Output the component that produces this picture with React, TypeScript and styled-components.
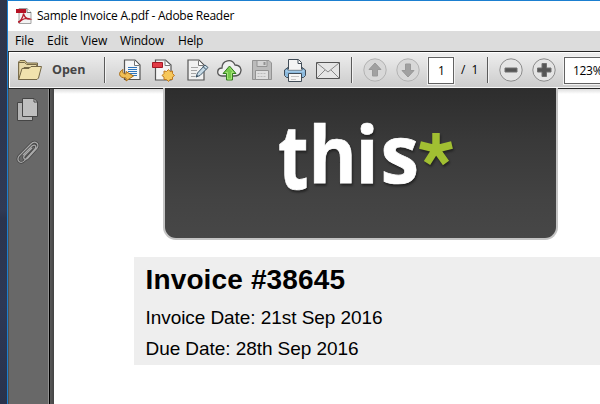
import React from "react";
import styled, { createGlobalStyle } from "styled-components";

const GlobalStyle = createGlobalStyle`
  * { box-sizing: border-box; }
  body { margin: 0; overflow: hidden; background: #fff; }
  svg { display: block; flex: none; overflow: visible; }
`;

const Desktop = styled.div`
  width: 600px;
  height: 404px;
  display: flex;
  overflow: hidden;
  padding-left: 7px;
  background: linear-gradient(180deg, #30364b 0, #2c354e 28%, #303a55 52%, #2b344d 54%, #2d3855 75%, #29324c 100%);
  font-family: "Open Sans", "Noto Sans", sans-serif;
  color: #000;
`;
const Window = styled.div`
  width: 593px;
  display: flex;
  flex-direction: column;
  flex: none;
  border-left: 1px solid #1b7fd0;
  border-top: 1px solid #1b7fd0;
  background: #fff;
`;
const TitleBar = styled.header`
  height: 30px;
  flex: none;
  display: flex;
  align-items: center;
  padding-left: 8px;
  gap: 5px;
`;
const Label = styled.span<{ $spacing?: number; $width?: number }>`
  flex: none;
  font-size: 12px;
  line-height: 16px;
  white-space: pre;
  letter-spacing: ${(p) => p.$spacing ?? 0}px;
  width: ${(p) => (p.$width ? `${p.$width}px` : "auto")};
`;
const MenuBar = styled.nav`
  height: 20px;
  flex: none;
  display: flex;
  align-items: center;
  padding-left: 7px;
  background: #dcdcdc;
`;
const Toolbar = styled.div`
  height: 38px;
  flex: none;
  display: flex;
  align-items: center;
  overflow: hidden;
  border-top: 1px solid #262626;
  border-bottom: 1px solid #252525;
  border-left: 1px solid #454545;
  box-shadow: inset 1px 1px #fff, inset 0 -1px #f4f4f4;
  background: linear-gradient(#eeeeee, #cbcbcb);
  padding-left: 9px;
`;
const OpenLabel = styled.span`
  flex: none;
  margin-left: 10px;
  width: 52px;
  font-size: 12.5px;
  font-weight: 700;
  line-height: 18px;
  color: #454545;
`;
const Divider = styled.i<{ $after: number }>`
  width: 2px;
  height: 26px;
  flex: none;
  margin-right: ${(p) => p.$after}px;
  background: linear-gradient(90deg, #5b5b5b 50%, #f2f2f2 50%);
`;
const Tools = styled.div<{ $gap: number; $after: number }>`
  display: flex;
  flex: none;
  align-items: center;
  gap: ${(p) => p.$gap}px;
  margin-right: ${(p) => p.$after}px;
`;
const Field = styled.div<{ $w: number; $pad: number }>`
  width: ${(p) => p.$w}px;
  height: 27px;
  flex: none;
  padding-left: ${(p) => p.$pad}px;
  border: 1px solid #626262;
  box-shadow: 0 0 0 1px #f1f1f1;
  background: #fff;
  font-size: 12px;
  letter-spacing: -0.3px;
  line-height: 25px;
`;
const PageCount = styled.div`
  width: 33px;
  flex: none;
  display: flex;
  gap: 6px;
  padding-left: 7px;
  font-size: 12px;
  line-height: 16px;
`;
const Body = styled.div`
  flex: 1;
  min-height: 0;
  display: flex;
`;
const Sidebar = styled.aside`
  width: 42px;
  flex: none;
  display: flex;
  flex-direction: column;
  align-items: flex-start;
  gap: 20px;
  padding: 9px 0 0 8px;
  border-left: 1px solid #505050;
  border-right: 1px solid #000;
  box-shadow: inset -1px 0 #929292;
  background: #686868;
`;
const Gutter = styled.div`
  width: 4px;
  flex: none;
  background: linear-gradient(90deg, #595959, #434343);
`;
const Page = styled.main`
  flex: 1;
  min-width: 0;
  background: linear-gradient(#dedede 0, #fff 5px);
`;
const Banner = styled.div`
  width: 395px;
  height: 152px;
  margin-left: 109px;
  margin-top: -1px;
  border: solid #c4c4c4;
  border-width: 0 2px 2px;
  border-radius: 0 0 13px 13px;
  background: linear-gradient(#2d2d2d 0, #393939 35%, #434343 75%, #474747 100%);
`;
const Details = styled.section`
  height: 108px;
  margin: 17px 0 0 80px;
  padding: 5px 0 0 11.5px;
  background: #eeeeee;
  font-family: "Liberation Sans", Arial, sans-serif;
`;
const Heading = styled.h1`
  margin: 0 0 6px;
  font-size: 28px;
  line-height: 36px;
  height: 34px;
  font-weight: 700;
  letter-spacing: 0.14px;
  white-space: nowrap;
`;
const Line = styled.p`
  margin: 0;
  font-size: 19px;
  line-height: 31px;
  letter-spacing: -0.065px;
  white-space: nowrap;
`;

const PdfIcon = () => (
  <svg width="16" height="16" viewBox="0 0 16 16">
    <path d="M3 .5h8l4 4v11H3z" fill="#f3f3f3" stroke="#a3a3a3" />
    <path d="M11 .5v4h4" fill="#fff" stroke="#777" />
    <path d="M0 1h10v4H0z" fill="#b51224" />
    <path d="M2 14c2-.2 5-4 5.500-8.500 1 4 3 6 6.500 5.500-3.500-1.500-8 0-11 3.500" fill="none" stroke="#b51d2c" strokeWidth="1.300" />
  </svg>
);
const FolderIcon = () => (
  <svg width="24" height="20" viewBox="0 0 24 20" stroke="#756847" strokeLinejoin="round">
    <path d="M.5 19V2L2 .5h5L9 3h10.500v4" fill="#dccb93" />
    <path d="M.7 19.500V2.500h6l2 2h10v3H6z" fill="#e9dbaa" />
    <path d="M.7 19.500 4 8.500h7l2-2h10.500l-3 11.500-1.500 1.500z" fill="#f1e2ad" />
  </svg>
);
const ConvertIcon = () => (
  <svg width="23" height="23" viewBox="0 0 23 23">
    <path d="M5.500 1h10.500l5 5v14.500H5.500z" fill="#f6f6f6" stroke="#555" strokeWidth="1.200" />
    <path d="M15.500 1.500v5h5" fill="#fff" stroke="#777" />
    <path d="M9 8.500h9M9 10.500h9M9 12.500h9M9 14.500h9M13 16.500h5" stroke="#2e75bc" />
    <path d="M4 10.500C-1 13-1 19 7 19v3l7.500-5L7 12.500V15c-3 0-4-2-3-4.500z" fill="#f0be55" stroke="#a76b17" strokeLinejoin="round" />
  </svg>
);
const CreateIcon = () => (
  <svg width="23" height="23" viewBox="0 0 23 23">
    <path d="M3.500 1h10l5.500 5v15H3.500z" fill="#f4f4f4" stroke="#555" strokeWidth="1.200" />
    <path d="M13 1.500v5h5" fill="#fff" stroke="#777" />
    <path d="M.5 3.500h10v5H.5z" fill="#e13b46" stroke="#a31824" />
    <path d="m16.500 10.500 1.500 2 2.500-.5v2.500l2 2-2 1.500v2.500H18l-1.500 2-2-2H12V18l-2-1.500 2-2V12l2.500.5z" fill="#f6c75a" stroke="#bd7820" />
  </svg>
);
const EditIcon = () => (
  <svg width="24" height="23" viewBox="-2 0 24 23">
    <path d="M1 1h11l5 5v15H1z" fill="#f1f1f1" stroke="#555" strokeWidth="1.200" />
    <path d="M11.500 1.500v5h5" fill="#fff" stroke="#777" />
    <path d="M4 8.500h7M4 11.500h6M4 14.500h5M4 17.500h4" stroke="#a5a5a5" />
    <path d="m9 18 1.500-4 7.500-8 3 2.500-8 8z" fill="#c8dbe7" stroke="#40596c" strokeLinejoin="round" />
    <path d="m9 18 2-1.500M16 7.500l3 3" stroke="#344d60" />
  </svg>
);
const CloudIcon = () => (
  <svg width="23" height="21" viewBox="2 0 23 21">
    <path d="M5 16C-1 16-.5 8 5 8 5 0 15-2 18 5c5 0 7 4 5.500 7.500-1 3-3 3.500-6.500 3.500z" fill="#efefef" stroke="#555" strokeWidth="1.300" />
    <path d="m12.500 6 6.500 7.500h-3.500V20h-6v-6.500H6z" fill="#75c84b" stroke="#347d20" strokeLinejoin="round" />
    <path d="m12.500 7.700 4 4.800h-2V19h-4v-6.500h-2" fill="none" stroke="#a5e477" />
  </svg>
);
const SaveIcon = () => (
  <svg width="22" height="20" viewBox="0 0 22 20" stroke="#939393">
    <path d="M.5.5H17L19.500 3v16.500H.5z" fill="#bbb" />
    <path d="M5 .5h10v6H5z" fill="#d5d5d5" />
    <path d="M12.500 2v3" strokeWidth="2" />
    <path d="M3.500 10.500h13v9h-13z" fill="#e0e0e0" />
    <path d="M5.500 13.500h9M5.500 16.500h9" stroke="#bbb" strokeDasharray="2 1" />
  </svg>
);
const PrintIcon = () => (
  <svg width="22" height="23" viewBox="0 0 22 23" stroke="#414c57" strokeLinejoin="round">
    <path d="M4.500 10V.5h10l3 3V10" fill="#f4f4f4" />
    <path d="M14 .5v4h3" fill="#fff" />
    <path d="M.5 11 4 8.500v3h14v-3l3.500 2.500v5.500l-2 2h-17l-2-2z" fill="#8bb9dd" />
    <path d="M2 12h18" stroke="#b9dbf4" />
    <path d="M4.500 14.500h13v8h-13z" fill="#f5f5f5" />
    <path d="M7 17.500h8M7 20.500h5" stroke="#c3c3c3" />
  </svg>
);
const MailIcon = () => (
  <svg width="24" height="17" viewBox="0 0 24 17" stroke="#888">
    <path d="M.5.5h23v16H.5z" fill="#e5e5e5" stroke="#555" />
    <path d="m1 1 11 9L23 1M1 16l8-8m14 8-8-8" fill="none" />
  </svg>
);
const RoundIcon = ({ kind }: { kind: "up" | "down" | "minus" | "plus" }) => {
  const active = kind === "minus" || kind === "plus";
  const shapes = {
    up: "m12 5 6 6.500h-3.500V18h-5v-6.500H6z",
    down: "m12 19-6-6.500h3.500V6h5v6.500H18z",
    minus: "M6 10h12v4H6z",
    plus: "M10 5.500h4.500V10H19v4h-4.500v4.500H10V14H5.500v-4H10z",
  };
  return (
    <svg width="24" height="24" viewBox="0 0 24 24">
      <circle cx="12" cy="12" r="11.200" fill={active ? "#e4e4e4" : "#d8d8d8"} stroke={active ? "#8c8c8c" : "#b3b3b3"} />
      <path d={shapes[kind]} fill={active ? "#555" : "#a1a1a1"} stroke={active ? "#707070" : "#999"} />
    </svg>
  );
};
const PagesIcon = () => (
  <svg width="22" height="23" viewBox="0 0 22 23" stroke="#454545">
    <path d="M.5 4.500h15v18H.5z" fill="#b5b5b5" />
    <path d="M5.500.5H17L20.500 4v14.500h-15z" fill="#bfbfbf" />
    <path d="M17 .5V4h3.500z" fill="#ddd" />
  </svg>
);
const ClipIcon = () => {
  const path = "m6 14 9-9c3-2 5 0 3 3L8 19c-4 5-9 1-6-4L14 3c4-4 9 0 6 4l-9 10c-3 3-6 0-3-3l7-7";
  return (
    <svg width="22" height="23" viewBox="0 0 22 23" fill="none">
      <path d={path} stroke="#444" strokeWidth="2.700" />
      <path d={path} stroke="#aaa" strokeWidth="1.200" />
    </svg>
  );
};
const LogoSvg = styled.svg`
  filter: drop-shadow(1px 2px 1px #222);
  font-family: "Open Sans", "Noto Sans", sans-serif;
  font-weight: 700;
`;
const Wordmark = () => (
  <LogoSvg width="392" height="150" viewBox="166 88 392 150">
    <g fill="#fff" stroke="#fff" strokeWidth=".7">
      <text transform="translate(279 189) scale(.79 1)" fontSize="89">t</text>
      <text transform="translate(309.500 182.500) scale(.93 1)" fontSize="79">h</text>
      <text transform="translate(356.500 182.500) scale(.96 1)" fontSize="79">i</text>
      <text transform="translate(381.500 182.500) scale(.97 1)" fontSize="80">s</text>
    </g>
    <g stroke="#a1bf32" strokeWidth="7.500">
      <path d="M437 149V133M437 149l-16-4M437 149l16-4M437 149l-9 14M437 149l10 14" />
    </g>
  </LogoSvg>
);

export default function App() {
  return (
    <>
      <GlobalStyle />
      <Desktop>
        <Window>
          <TitleBar>
            <PdfIcon />
            <Label $spacing={-0.25}>Sample Invoice A.pdf - Adobe Reader</Label>
          </TitleBar>
          <MenuBar>
            <Label $width={32}>File</Label>
            <Label $width={34}>Edit</Label>
            <Label $width={39}>View</Label>
            <Label $width={58} $spacing={-0.2}>Window</Label>
            <Label $spacing={-0.2}>Help</Label>
          </MenuBar>
          <Toolbar>
            <FolderIcon />
            <OpenLabel>Open</OpenLabel>
            <Divider $after={13} />
            <Tools $gap={10} $after={11}>
              <ConvertIcon />
              <CreateIcon />
              <EditIcon />
              <CloudIcon />
              <SaveIcon />
              <PrintIcon />
              <MailIcon />
            </Tools>
            <Divider $after={10} />
            <Tools $gap={9} $after={8}>
              <RoundIcon kind="up" />
              <RoundIcon kind="down" />
            </Tools>
            <Field $w={26} $pad={9}>1</Field>
            <PageCount>
              <span>/</span>
              <span>1</span>
            </PageCount>
            <Divider $after={10} />
            <Tools $gap={9} $after={8}>
              <RoundIcon kind="minus" />
              <RoundIcon kind="plus" />
            </Tools>
            <Field $w={60} $pad={8}>123%</Field>
          </Toolbar>
          <Body>
            <Sidebar>
              <PagesIcon />
              <ClipIcon />
            </Sidebar>
            <Gutter />
            <Page>
              <Banner>
                <Wordmark />
              </Banner>
              <Details>
                <Heading>Invoice #38645</Heading>
                <Line>Invoice Date: 21st Sep 2016</Line>
                <Line>Due Date: 28th Sep 2016</Line>
              </Details>
            </Page>
          </Body>
        </Window>
      </Desktop>
    </>
  );
}
